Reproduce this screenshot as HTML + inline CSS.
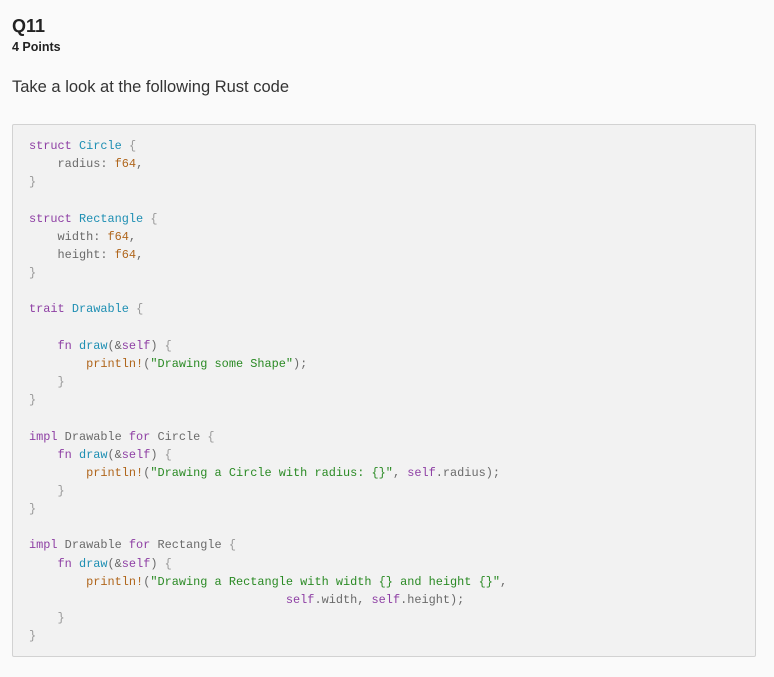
<!DOCTYPE html>
<html><head><style>
body{margin:0;background:#fafafa;font-family:"Liberation Sans",sans-serif;color:#2d2d2d;width:774px;height:677px;overflow:hidden;position:relative}
.t{position:absolute;left:12px;margin:0}
pre{position:absolute;left:12px;top:124px;width:744px;height:533px;margin:0;background:#f2f2f2;border:1px solid #d2d2d2;border-radius:2px;box-sizing:border-box;padding:12px 0 0 16px;font-family:"Liberation Mono",monospace;font-size:11.9px;line-height:18.15px;color:#6a6a6a}
.k{color:#8e3fa4}.c{color:#1e8fb3}.n{color:#b0661c}.b{color:#999}.s{color:#2a8a24}.f{color:#1e8fb3}
</style></head><body>
<div class="t" style="top:16px;font-size:18px;font-weight:bold;color:#222">Q11</div>
<div class="t" style="top:40px;font-size:12.5px;font-weight:bold;color:#222">4 Points</div>
<div class="t" style="top:78px;font-size:16.5px;color:#333">Take a look at the following Rust code</div>
<pre><span class="k">struct</span> <span class="c">Circle</span> <span class="b">{</span>
    radius: <span class="n">f64</span>,
<span class="b">}</span>

<span class="k">struct</span> <span class="c">Rectangle</span> <span class="b">{</span>
    width: <span class="n">f64</span>,
    height: <span class="n">f64</span>,
<span class="b">}</span>

<span class="k">trait</span> <span class="c">Drawable</span> <span class="b">{</span>

    <span class="k">fn</span> <span class="f">draw</span>(&amp;<span class="k">self</span>) <span class="b">{</span>
        <span class="n">println!</span>(<span class="s">"Drawing some Shape"</span>);
    <span class="b">}</span>
<span class="b">}</span>

<span class="k">impl</span> Drawable <span class="k">for</span> Circle <span class="b">{</span>
    <span class="k">fn</span> <span class="f">draw</span>(&amp;<span class="k">self</span>) <span class="b">{</span>
        <span class="n">println!</span>(<span class="s">"Drawing a Circle with radius: {}"</span>, <span class="k">self</span>.radius);
    <span class="b">}</span>
<span class="b">}</span>

<span class="k">impl</span> Drawable <span class="k">for</span> Rectangle <span class="b">{</span>
    <span class="k">fn</span> <span class="f">draw</span>(&amp;<span class="k">self</span>) <span class="b">{</span>
        <span class="n">println!</span>(<span class="s">"Drawing a Rectangle with width {} and height {}"</span>,
                                    <span class="k">self</span>.width, <span class="k">self</span>.height);
    <span class="b">}</span>
<span class="b">}</span></pre>
</body></html>
